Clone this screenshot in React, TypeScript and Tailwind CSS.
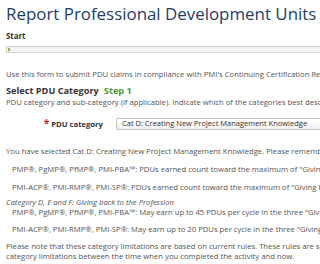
export default function App() {
  return (
    <div
      className="w-[320px] h-[264px] overflow-hidden bg-white text-[#555] whitespace-nowrap"
      style={{ fontFamily: '"Open Sans", "Liberation Sans", sans-serif' }}
    >
      <div className="pl-[6px]">
        <h1 className="pt-[3px] text-[16.9px] leading-[22px] text-[#1f3e66] font-normal">
          Report Professional Development Units
        </h1>
        <div className="mt-[6px] text-[7.9px] leading-[10px] font-bold text-[#333]">Start</div>
        <div className="mt-[5px] h-[7px] w-[330px] border border-[#d4d4d4] border-t-[#c8c8c8] bg-[#f3f3f3] flex items-stretch py-[1px]">
          <div className="w-[2px] ml-[1px] bg-[#8fb04a]" />
        </div>
        <p className="mt-[16px] text-[7.7px] leading-[10px]">
          Use this form to submit PDU claims in compliance with PMI's Continuing Certification Requirements.
        </p>
        <div className="mt-[6px] flex items-baseline gap-[5px]">
          <span className="text-[9.2px] leading-[12px] font-bold text-[#333]">Select PDU Category</span>
          <span className="text-[9.2px] leading-[12px] font-bold text-[#4a9a2c]">Step 1</span>
        </div>
        <p className="text-[7.7px] leading-[10px]">
          PDU category and sub-category (if applicable). Indicate which of the categories best describes the activity.
        </p>
        <div className="mt-[11px] flex items-center">
          <div className="w-[110px] shrink-0 flex justify-end items-center pr-[13px]">
            <span className="text-[#c62828] text-[10px] leading-[10px] font-bold mr-[2px] relative top-[-1px]">*</span>
            <span className="text-[7.7px] leading-[10px] font-bold text-[#333]">PDU category</span>
          </div>
          <div className="h-[12px] w-[260px] shrink-0 border border-[#c4c4c4] rounded-[2px] bg-gradient-to-b from-white to-[#f1f1f1] flex items-center pl-[5px] text-[7.5px] text-[#333]">
            Cat D: Creating New Project Management Knowledge
          </div>
        </div>
        <p className="mt-[16px] text-[7.7px] leading-[10px]">
          You have selected Cat D: Creating New Project Management Knowledge. Please remember the following limitations.
        </p>
        <p className="mt-[8px] pl-[6px] text-[7.7px] leading-[10px]">
          PMP®, PgMP®, PfMP®, PMI-PBA℠: PDUs earned count toward the maximum of "Giving back to the Profession"
        </p>
        <p className="mt-[8px] pl-[6px] text-[7.7px] leading-[10px]">
          PMI-ACP®, PMI-RMP®, PMI-SP®: PDUs earned count toward the maximum of "Giving back to the Profession"
        </p>
        <p className="mt-[5px] text-[7.7px] leading-[10px] italic">
          Category D, E and F: Giving back to the Profession
        </p>
        <p className="pl-[6px] text-[7.7px] leading-[10px]">
          PMP®, PgMP®, PfMP®, PMI-PBA℠: May earn up to 45 PDUs per cycle in the three "Giving back" categories
        </p>
        <p className="mt-[7px] pl-[6px] text-[7.7px] leading-[10px]">
          PMI-ACP®, PMI-RMP®, PMI-SP®: May earn up to 20 PDUs per cycle in the three "Giving back" categories
        </p>
        <p className="mt-[7px] text-[7.7px] leading-[10px]">
          Please note that these category limitations are based on current rules. These rules are subject to change
        </p>
        <p className="text-[7.7px] leading-[10px]">
          category limitations between the time when you completed the activity and now.
        </p>
      </div>
    </div>
  );
}
